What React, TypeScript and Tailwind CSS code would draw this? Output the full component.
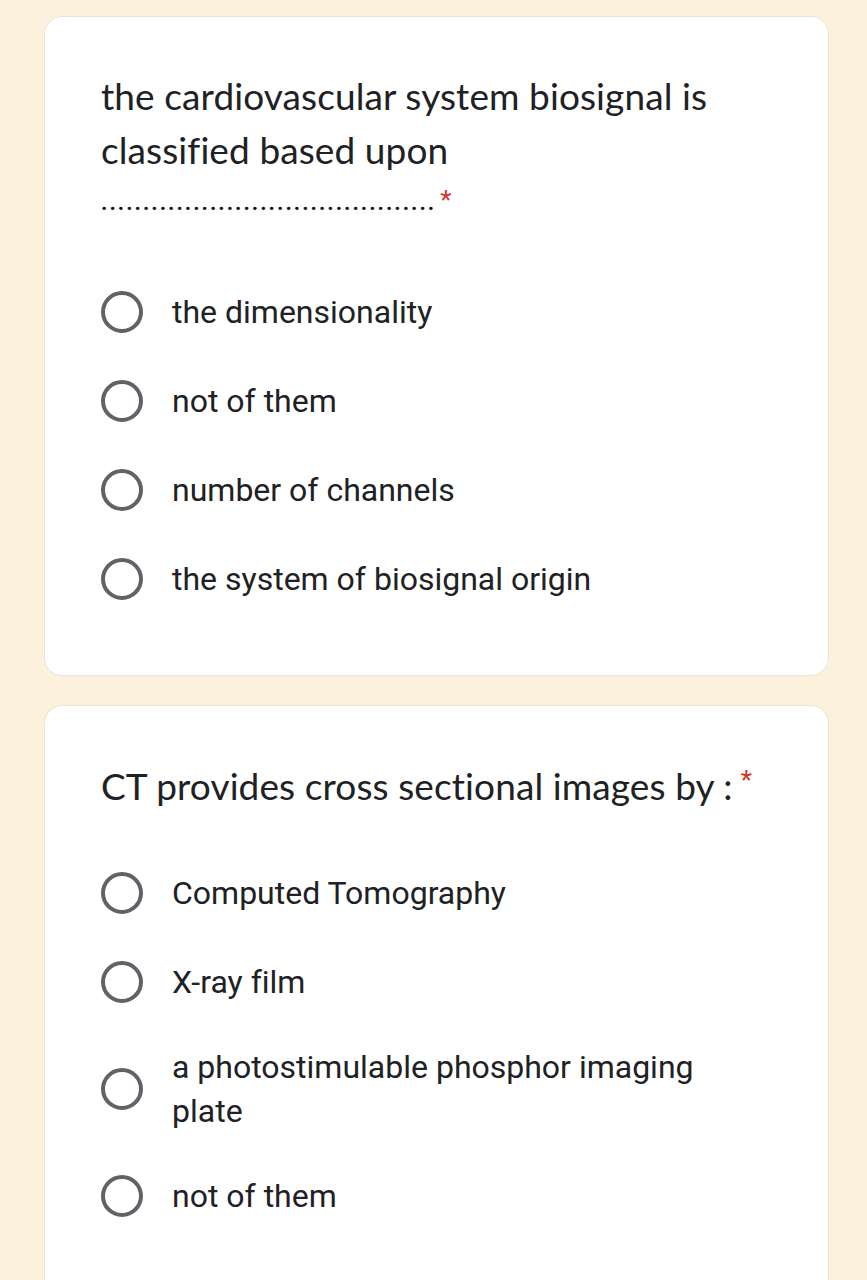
import React from "react";

const Radio = () => (
  <span className="block w-[42px] h-[42px] rounded-full border-[4px] border-[#5f6368] shrink-0" />
);

const Option = ({ label }: { label: string }) => (
  <div className="flex items-center h-[89px]">
    <div className="w-[71px] flex items-center justify-start">
      <Radio />
    </div>
    <span className="text-[32px] leading-[44px] text-[#202124]" style={{ fontFamily: "Roboto, sans-serif" }}>
      {label}
    </span>
  </div>
);

export default function App() {
  const title = { fontFamily: "Lato, sans-serif" };
  return (
    <div className="min-h-[1280px] bg-[#fbf1dd] pt-[16px] pl-[44px] pr-[38px] overflow-hidden [font-variant-ligatures:none]">
      <div className="bg-white rounded-[18px] border border-[#ebe3d3] h-[660px] pl-[56px] pr-[40px] pt-[52px]">
        <div className="text-[37px] leading-[54px] text-[#202124] tracking-[0.1px]" style={title}>
          <div>the cardiovascular system biosignal is</div>
          <div>classified based upon</div>
        </div>
        <div className="flex items-start h-[60px] pt-[6px]">
          <span className="text-[22px] font-bold leading-[40px] text-[#111] tracking-[2px]" style={{ fontFamily: "Roboto, sans-serif" }}>
            ........................................
          </span>
          <span className="text-[#d93025] text-[26px] leading-[26px] ml-[4px] mt-[4px]" style={{ fontFamily: "Roboto, sans-serif" }}>*</span>
        </div>
        <div className="mt-[30px]">
          <Option label="the dimensionality" />
          <Option label="not of them" />
          <Option label="number of channels" />
          <Option label="the system of biosignal origin" />
        </div>
      </div>

      <div className="mt-[29px] bg-white rounded-t-[18px] border border-b-0 border-[#ebe3d3] h-[600px] pl-[56px] pr-[30px] pt-[53px]">
        <div className="flex items-start text-[37px] leading-[54px] text-[#202124] tracking-[0.1px]" style={title}>
          <span className="whitespace-nowrap">CT provides cross sectional images by :</span>
          <span className="text-[#d93025] text-[26px] leading-[26px] ml-[8px] mt-[8px]" style={{ fontFamily: "Roboto, sans-serif" }}>*</span>
        </div>
        <div className="mt-[35px]">
          <Option label="Computed Tomography" />
          <Option label="X-ray film" />
          <div className="flex items-center py-[18.5px]">
            <div className="w-[71px] flex items-center">
              <Radio />
            </div>
            <span className="text-[32px] leading-[44px] text-[#202124] max-w-[600px]" style={{ fontFamily: "Roboto, sans-serif" }}>
              a photostimulable phosphor imaging plate
            </span>
          </div>
          <Option label="not of them" />
        </div>
      </div>
    </div>
  );
}
